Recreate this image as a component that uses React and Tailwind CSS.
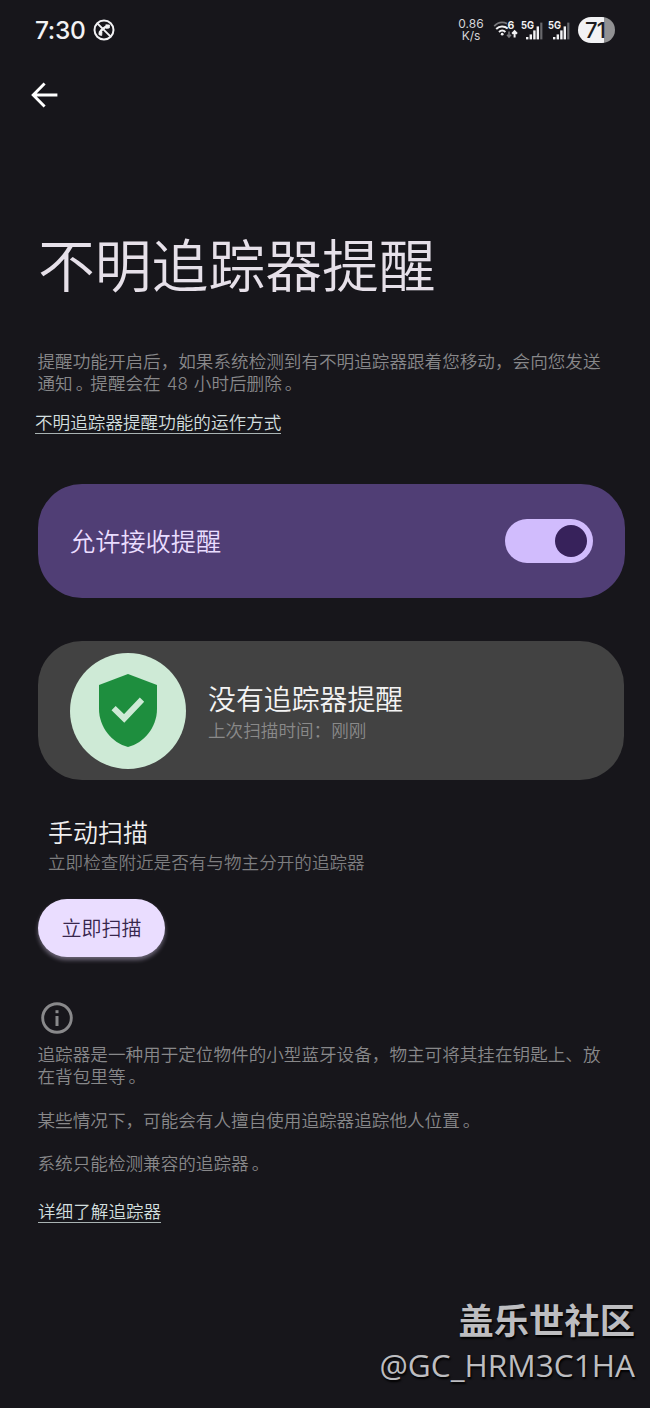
const CallBlockedIcon = () => (
  <svg width="22" height="22" viewBox="0 0 22 22" fill="none" stroke="#f2f2f4">
    <circle cx="11" cy="11" r="9.5" strokeWidth="2" />
    <path d="M4.6 4.6l12.8 12.8" strokeWidth="2" />
    <path d="M6.7 15.6c.2-2.6 1.4-4.6 3-5.7 1.5-1.3 3.4-2.2 6-2.6" strokeWidth="2.4" />
    <path d="M6.2 12.6l2.8.3-.3 3.6-2.4-.6zM12.8 5.8l3.8.2-.3 3-3 .4z" fill="#f2f2f4" strokeWidth="0.8" />
  </svg>
);

const WifiIcon = () => (
  <svg width="26" height="20" viewBox="0 0 26 20" fill="none">
    <path d="M1.2 6.2C4.6 2.6 9.4 1.6 14 3.6" stroke="#77777b" strokeWidth="1.7" />
    <path d="M3.2 9c3.3-3.2 8.1-3.3 11.5-.4" stroke="#f2f2f4" strokeWidth="2" />
    <path d="M6 12c1.9-1.8 4.5-1.8 6.4 0" stroke="#f2f2f4" strokeWidth="2" />
    <circle cx="9.2" cy="14.2" r="1.4" fill="#f2f2f4" />
    <text x="14.6" y="9.4" fill="#f2f2f4" fontSize="10.5" fontWeight="700" fontFamily="Inter, sans-serif">6</text>
    <path d="M16 11.5v5M14 14.8l2 2.2 2-2.2" stroke="#77777b" strokeWidth="1.6" />
    <path d="M21.6 17.4v-5M19.2 13.8l2.4-2.5 2.4 2.5" stroke="#f2f2f4" strokeWidth="2" />
  </svg>
);

const SignalIcon = () => (
  <svg width="23" height="20" viewBox="0 0 23 20" fill="#f2f2f4">
    <text x="0" y="8.8" fontSize="10.6" fontWeight="700" fontFamily="Inter, sans-serif" textLength="13" lengthAdjust="spacingAndGlyphs">5G</text>
    <rect x="5" y="17" width="2.4" height="2.4" />
    <rect x="8.6" y="14.4" width="2.4" height="5" />
    <rect x="12.2" y="10.4" width="2.4" height="9" />
    <rect x="15.6" y="6.4" width="2.4" height="13" />
    <rect x="19.2" y="2.6" width="2.2" height="16.8" fill="#68686c" />
  </svg>
);

const StatusBar = () => (
  <div className="flex h-[60px] items-center pl-[35px] pr-[35px] text-[#f2f2f4]">
    <span className="w-[58px] font-[Inter,sans-serif] text-[24.5px] font-[450] leading-none tracking-[-0.3px]">7:30</span>
    <CallBlockedIcon />
    <div className="ml-auto flex items-center">
      <div className="mr-[9px] w-[26px] text-center font-[Inter,sans-serif] text-[12px] font-normal leading-[12px] text-[#d4d4d6]">
        <div>0.86</div>
        <div>K/s</div>
      </div>
      <WifiIcon />
      <div className="ml-[2px] mr-[7px] flex gap-[4px]">
        <SignalIcon />
        <SignalIcon />
      </div>
      <div className="flex h-[26px] w-[37px] items-center rounded-full bg-linear-to-r from-[#f2f2f4] from-70% to-[#919193] to-70% pl-[7px] font-[Inter,sans-serif] text-[22px] font-[450] leading-none tracking-[-0.8px] text-[#1c1c20]">
        71
      </div>
    </div>
  </div>
);

const BackIcon = () => (
  <svg width="28" height="26" viewBox="0 0 28 26" fill="none" stroke="#ffffff" strokeWidth="2.9">
    <path d="M26.4 13H2.6M13.6 1.4L2.2 13 13.6 24.6" />
  </svg>
);

const ShieldIcon = () => (
  <svg width="58" height="73" viewBox="0 0 58 73">
    <path d="M29 0L58 11V35C58 53 45 69 29 73C13 69 0 53 0 35V11Z" fill="#1e8e3e" />
    <path d="M14.6 34.2L25.2 44.4L43 25.6" fill="none" stroke="#ceead6" strokeWidth="6" />
  </svg>
);

const InfoIcon = () => (
  <svg width="32" height="32" viewBox="0 0 32 32">
    <circle cx="16" cy="16" r="14.3" fill="none" stroke="#89898b" strokeWidth="2.9" />
    <rect x="14.5" y="8.2" width="3" height="3" fill="#89898b" />
    <rect x="14.5" y="14" width="3" height="10" fill="#89898b" />
  </svg>
);

const Switch = () => (
  <div className="flex h-[44px] w-[88px] items-center justify-end rounded-full bg-[#d1bcfd] pr-[6px]">
    <div className="size-[32px] rounded-full bg-[#37225b]" />
  </div>
);

// full stop sits further right in its cell
const Stop = () => <span className="-mr-[3px] ml-[3px]">。</span>;

const App = () => {
  return (
    <div className="flex h-[1408px] w-[650px] flex-col overflow-hidden bg-[#17161b] font-['Noto_Sans_CJK_SC',sans-serif] font-[350] text-[#88888a]">
      <StatusBar />

      <div className="mt-[22px] pl-[31px]">
        <BackIcon />
      </div>

      <h1 className="mt-[114px] whitespace-nowrap pl-[38px] text-[56.8px] leading-[80px] text-[#e6e0e9]">
        不明追踪器提醒
      </h1>

      <p className="mt-[48px] h-[44px] whitespace-nowrap pl-[37.5px] text-[17.6px] leading-[22px]">
        提醒功能开启后，如果系统检测到有不明追踪器跟着您移动，会向您发送
        <br />
        通知
        <Stop />
        提醒会在<span className="mx-[6px] font-[Inter,sans-serif] text-[17px] font-light">48</span>小时后删除
        <Stop />
      </p>
      <div className="mt-[17px] flex pl-[35px]">
        <a className="border-b border-[#a9b3b3] text-[17.6px] leading-[22px] text-[#d3dfdf]">
          不明追踪器提醒功能的运作方式
        </a>
      </div>

      <div className="ml-[38px] mt-[50px] flex h-[114px] w-[587px] items-center justify-between rounded-[44px] bg-[#503e75] pl-[32px] pr-[32px]">
        <span className="-mt-[3px] text-[25.2px] leading-[36px] text-[#eaddff]">允许接收提醒</span>
        <Switch />
      </div>

      <div className="ml-[38px] mt-[43px] flex h-[139px] w-[586px] items-center rounded-[44px] bg-[#424242] pl-[32px]">
        <div className="flex size-[116px] items-center justify-center rounded-full bg-[#ceead6]">
          <ShieldIcon />
        </div>
        <div className="ml-[22px]">
          <div className="text-[27.9px] leading-[38px] text-[#f4f4f4]">没有追踪器提醒</div>
          <div className="text-[17.6px] leading-[25px] text-[#8a8a8a]">上次扫描时间：刚刚</div>
        </div>
      </div>

      <div className="mt-[33px] pl-[48px]">
        <div className="text-[25px] leading-[36px] text-[#f0f0f0]">手动扫描</div>
        <div className="text-[17.6px] leading-[25px] text-[#7d7d7f]">立即检查附近是否有与物主分开的追踪器</div>
      </div>

      <button className="ml-[38px] mt-[25px] h-[58px] w-[127px] shrink-0 rounded-full bg-[#eaddff] pb-[1px] text-[20px] text-[#37264d] shadow-[0_3px_4px_rgba(234,221,255,0.4)]">
        立即扫描
      </button>

      <div className="mt-[45px] pl-[41px]">
        <InfoIcon />
      </div>
      <div className="mt-[9px] flex flex-col gap-[21.5px] whitespace-nowrap pl-[37.5px] text-[17.6px] leading-[22px]">
        <p>
          追踪器是一种用于定位物件的小型蓝牙设备，物主可将其挂在钥匙上、放
          <br />
          在背包里等
          <Stop />
        </p>
        <p>
          某些情况下，可能会有人擅自使用追踪器追踪他人位置
          <Stop />
        </p>
        <p>
          系统只能检测兼容的追踪器
          <Stop />
        </p>
      </div>
      <div className="mt-[26px] flex pl-[38px]">
        <a className="border-b border-[#a9b3b3] text-[17.6px] leading-[22px] text-[#d3dfdf]">详细了解追踪器</a>
      </div>

      <div className="mt-[72px] flex flex-col items-end pr-[15px] text-[#bdbdc0] [text-shadow:1px_2px_2px_#000]">
        <div className="text-[35.3px] font-bold leading-[48px]">盖乐世社区</div>
        <div className="font-['Open_Sans',sans-serif] text-[31.6px] font-normal leading-[44px]">@GC_HRM3C1HA</div>
      </div>
    </div>
  );
};

export default App;
